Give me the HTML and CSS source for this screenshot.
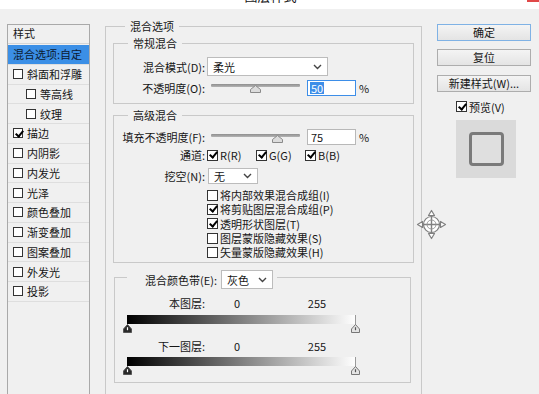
FILE: index.html
```html
<!DOCTYPE html>
<html lang="zh-CN">
<head>
    <meta charset="UTF-8">
    <meta name="viewport" content="width=device-width, initial-scale=1.0">
    <title>图层样式</title>
    <link rel="stylesheet" href="styles.css">
</head>
<body>

    <div class="titlebar">
        <span class="title">图层样式</span>
        <span class="close"></span>
    </div>

    <div class="dialog">
        <!-- effect list -->
        <div class="styles">
            <div class="styles-head">样式</div>
            <div class="item active">混合选项:自定</div>
            <div class="item"><span class="cb"></span>斜面和浮雕</div>
            <div class="item sub"><span class="cb"></span>等高线</div>
            <div class="item sub"><span class="cb"></span>纹理</div>
            <div class="item"><span class="cb on"></span>描边</div>
            <div class="item"><span class="cb"></span>内阴影</div>
            <div class="item"><span class="cb"></span>内发光</div>
            <div class="item"><span class="cb"></span>光泽</div>
            <div class="item"><span class="cb"></span>颜色叠加</div>
            <div class="item"><span class="cb"></span>渐变叠加</div>
            <div class="item"><span class="cb"></span>图案叠加</div>
            <div class="item"><span class="cb"></span>外发光</div>
            <div class="item"><span class="cb"></span>投影</div>
        </div>

        <!-- blending options -->
        <div class="options">
            <div class="group outer">
                <div class="legend">混合选项</div>

                <div class="group normal">
                    <div class="legend">常规混合</div>
                    <div class="row mode-row">
                        <span class="label">混合模式(D):</span>
                        <div class="select mode-select">
                            <span>柔光</span>
                            <svg class="chev" width="9" height="6" viewBox="0 0 9 6"><polyline points="1,1 4.5,4.5 8,1" fill="none" stroke="#444" stroke-width="1.4"/></svg>
                        </div>
                    </div>
                    <div class="row slider-row">
                        <span class="label">不透明度(O):</span>
                        <div class="slider">
                            <div class="track"></div>
                            <svg class="thumb" style="left: 50%" width="11" height="8" viewBox="0 0 11 8"><path d="M0.5 7.5V4.5L5.5 0.5L10.5 4.5V7.5Z" fill="#dcdcdc" stroke="#8a8a8a"/></svg>
                        </div>
                        <div class="num focus"><span class="sel">50</span></div>
                        <span class="pct">%</span>
                    </div>
                </div>

                <div class="group advanced">
                    <div class="legend">高级混合</div>
                    <div class="row fill-row">
                        <span class="label">填充不透明度(F):</span>
                        <div class="slider">
                            <div class="track"></div>
                            <svg class="thumb" style="left: 75%" width="11" height="8" viewBox="0 0 11 8"><path d="M0.5 7.5V4.5L5.5 0.5L10.5 4.5V7.5Z" fill="#dcdcdc" stroke="#8a8a8a"/></svg>
                        </div>
                        <div class="num">75</div>
                        <span class="pct">%</span>
                    </div>
                    <div class="row channel-row">
                        <span class="label">通道:</span>
                        <span class="check chan"><span class="cb on"></span>R(R)</span>
                        <span class="check chan"><span class="cb on"></span>G(G)</span>
                        <span class="check"><span class="cb on"></span>B(B)</span>
                    </div>
                    <div class="row knock-row">
                        <span class="label">挖空(N):</span>
                        <div class="select knock-select">
                            <span>无</span>
                            <svg class="chev" width="9" height="6" viewBox="0 0 9 6"><polyline points="1,1 4.5,4.5 8,1" fill="none" stroke="#444" stroke-width="1.4"/></svg>
                        </div>
                    </div>
                    <div class="checklist">
                        <span class="check"><span class="cb"></span>将内部效果混合成组(I)</span>
                        <span class="check"><span class="cb on"></span>将剪贴图层混合成组(P)</span>
                        <span class="check"><span class="cb on"></span>透明形状图层(T)</span>
                        <span class="check"><span class="cb"></span>图层蒙版隐藏效果(S)</span>
                        <span class="check"><span class="cb"></span>矢量蒙版隐藏效果(H)</span>
                    </div>
                </div>

                <div class="group blend">
                    <div class="legend blend-legend">
                        <span class="blend-label">混合颜色带(E):</span>
                        <div class="select gray-select">
                            <span>灰色</span>
                            <svg class="chev" width="9" height="6" viewBox="0 0 9 6"><polyline points="1,1 4.5,4.5 8,1" fill="none" stroke="#444" stroke-width="1.4"/></svg>
                        </div>
                    </div>

                    <div class="row range-row">
                        <span class="label">本图层:</span>
                        <span class="low">0</span>
                        <span class="high">255</span>
                    </div>
                    <div class="ramp">
                        <div class="ramp-bar"></div>
                        <div class="ramp-end"></div>
                        <svg class="stop stop-left" width="9" height="9" viewBox="0 0 9 9"><path d="M0.5 8.5V5L4.5 0.5L8.5 5V8.5Z" fill="#2a2a2a" stroke="#555"/><path d="M4.5 3.2V6.2" stroke="#fff" stroke-width="1.2"/></svg>
                        <svg class="stop stop-right" width="9" height="9" viewBox="0 0 9 9"><path d="M0.5 8.5V5L4.5 0.5L8.5 5V8.5Z" fill="#e4e4e4" stroke="#777"/><path d="M4.5 3.2V6.2" stroke="#555" stroke-width="1.2"/></svg>
                    </div>

                    <div class="row range-row under">
                        <span class="label">下一图层:</span>
                        <span class="low">0</span>
                        <span class="high">255</span>
                    </div>
                    <div class="ramp">
                        <div class="ramp-bar"></div>
                        <div class="ramp-end"></div>
                        <svg class="stop stop-left" width="9" height="9" viewBox="0 0 9 9"><path d="M0.5 8.5V5L4.5 0.5L8.5 5V8.5Z" fill="#2a2a2a" stroke="#555"/><path d="M4.5 3.2V6.2" stroke="#fff" stroke-width="1.2"/></svg>
                        <svg class="stop stop-right" width="9" height="9" viewBox="0 0 9 9"><path d="M0.5 8.5V5L4.5 0.5L8.5 5V8.5Z" fill="#e4e4e4" stroke="#777"/><path d="M4.5 3.2V6.2" stroke="#555" stroke-width="1.2"/></svg>
                    </div>
                </div>
            </div>
        </div>

        <!-- buttons and preview -->
        <div class="actions">
            <div class="btn default">确定</div>
            <div class="btn">复位</div>
            <div class="btn new">新建样式(W)...</div>
            <div class="check preview-check"><span class="cb on"></span>预览(V)</div>
            <div class="preview"><div class="preview-swatch"></div></div>
        </div>
    </div>

    <!-- move cursor sitting over the dialog -->
    <svg class="cursor" width="31" height="31" viewBox="0 0 31 31">
        <g fill="#fff" stroke="#808080" stroke-width="1.2" stroke-linejoin="round">
            <path d="M15.5 1.5L18.5 6.5H12.5Z"/>
            <path d="M15.5 29.5L18.5 24.5H12.5Z"/>
            <path d="M1.5 15.5L6.5 12.5V18.5Z"/>
            <path d="M29.5 15.5L24.5 12.5V18.5Z"/>
            <circle cx="15.5" cy="15.5" r="8"/>
        </g>
        <path d="M15.5 6.5V24.5M6.5 15.5H24.5" stroke="#808080" stroke-width="1.4"/>
        <circle cx="15.5" cy="15.5" r="4.5" fill="none" stroke="#9a9a9a" stroke-width="1"/>
    </svg>

</body>
</html>
```

FILE: styles.css
```css
body {
    margin: 0;
    width: 539px;
    height: 394px;
    overflow: hidden;
    position: relative;
    background-color: #f0f0f0;
    font-family: "Noto Sans CJK SC", "Noto Sans", sans-serif;
    font-size: 11px;
    color: #161616;
}

/* window title, mostly cut off at the top */
.titlebar {
    height: 9px;
    background-color: #fff;
    overflow: hidden;
    position: relative;
    text-align: center;
}

.title {
    display: block;
    font-size: 13px;
    line-height: 16px;
    margin-top: -12px;
    padding-left: 2px;
}

.close {
    position: absolute;
    right: 0;
    top: 0;
    width: 12px;
    height: 2px;
    background-color: #e04848;
}

.dialog {
    display: flex;
    align-items: flex-start;
    padding-left: 7px;
}

/* left list */
.styles {
    width: 83px;
    height: 380px;
    margin-top: 15px;
    border: 1px solid #a9a9a9;
    box-sizing: border-box;
}

.styles-head {
    height: 18px;
    line-height: 16px;
    padding-left: 5px;
    border-bottom: 1px solid #d6d6d6;
}

.item {
    display: flex;
    align-items: center;
    height: 19.75px;
    padding-left: 5px;
    border-bottom: 1px solid #dedede;
    box-sizing: border-box;
    white-space: nowrap;
}

.item.active {
    margin-top: 1px;
    background-color: #3b8fe6;
    color: #0c1a30;
}

.item.sub {
    padding-left: 18px;
}

.cb {
    position: relative;
    display: inline-block;
    flex: none;
    width: 11px;
    height: 11px;
    border: 1px solid #333;
    background-color: #fff;
    box-sizing: border-box;
    margin-right: 2px;
}

.item .cb {
    width: 10px;
    height: 10px;
    margin-right: 4px;
}

.cb.on::after {
    content: "";
    position: absolute;
    left: 2.5px;
    top: -0.5px;
    width: 3px;
    height: 6px;
    border: solid #000;
    border-width: 0 2px 2px 0;
    transform: rotate(40deg);
}

/* group boxes */
.options {
    width: 317px;
    margin-left: 15px;
    margin-top: 17px;
}

.group {
    border: 1px solid #c9c9c9;
}

.legend {
    width: fit-content;
    height: 14px;
    line-height: 14px;
    margin: -8px 0 0 12px;
    padding: 0 5px;
    background-color: #f0f0f0;
    white-space: nowrap;
}

.outer {
    height: 380px;
    padding: 0 7px;
    box-sizing: border-box;
}

.normal {
    margin-top: 10px;
    padding-bottom: 8px;
}

.normal .legend,
.advanced .legend {
    margin-left: 14px;
}

.advanced {
    margin-top: 11px;
    padding-bottom: 3px;
}

.row {
    display: flex;
    align-items: center;
    white-space: nowrap;
}

.label {
    flex: none;
    width: 91px;
    text-align: right;
}

.select {
    display: flex;
    align-items: center;
    height: 19px;
    margin-left: 2px;
    padding-left: 5px;
    border: 1px solid #bcbcbc;
    background-color: #fff;
    box-sizing: border-box;
}

.chev {
    margin-left: auto;
    margin-right: 5px;
}

.mode-row {
    margin-top: 7px;
    height: 19px;
}

.mode-select {
    width: 121px;
}

.slider-row {
    margin-top: 4px;
    height: 15px;
}

.slider {
    position: relative;
    flex: none;
    width: 89px;
    height: 15px;
    margin-left: 6px;
}

.track {
    margin-top: 4px;
    height: 3px;
    border-radius: 1px;
    background: linear-gradient(#8e8e8e, #b4b4b4);
}

.thumb {
    position: absolute;
    top: 5px;
    margin-left: -5.5px;
}

.num {
    flex: none;
    width: 49px;
    height: 16px;
    margin-left: 7px;
    padding-left: 3px;
    line-height: 14px;
    border: 1px solid #b8b8b8;
    background-color: #fff;
    box-sizing: border-box;
}

.num.focus {
    border-color: #3d8ee8;
    padding-left: 2px;
}

.sel {
    display: inline-block;
    padding: 0 1px;
    line-height: 12px;
    background-color: #3d8ee8;
    color: #fff;
}

.pct {
    margin-left: 3px;
}

.fill-row {
    margin-top: 7px;
    height: 16px;
}

.channel-row {
    margin-top: 3px;
    height: 14px;
}

.check {
    display: flex;
    align-items: center;
    white-space: nowrap;
}

.channel-row .check {
    margin-left: 2px;
}

.chan {
    width: 47px;
}

.knock-row {
    margin-top: 6px;
    height: 16px;
}

.knock-select {
    width: 50px;
    height: 16px;
    margin-left: 3px;
}

.checklist {
    margin-top: 4px;
    padding-left: 93px;
}

.checklist .check {
    height: 14.3px;
    line-height: 14px;
}

/* blend if */
.blend {
    height: 106px;
    margin: 14px 3px 0 1px;
    box-sizing: border-box;
}

.blend-legend {
    display: flex;
    align-items: center;
    height: 19px;
    margin-left: 12px;
    padding: 0 4px;
}

.blend-label {
    padding-left: 14px;
}

.gray-select {
    width: 52px;
    margin-left: 4px;
}

.range-row {
    margin-top: 7px;
    height: 14px;
}

.range-row.under {
    margin-top: 6px;
}

.range-row .label {
    width: 90px;
}

.low {
    width: 64px;
    text-align: center;
}

.high {
    width: 96px;
    text-align: center;
}

.ramp {
    position: relative;
    width: 229px;
    height: 18px;
    margin: 5px 0 0 12px;
}

.range-row.under + .ramp {
    margin-top: 4px;
}

.ramp-bar {
    height: 9px;
    background: linear-gradient(to right, #000, #fff);
}

.ramp-end {
    position: absolute;
    right: 0;
    top: 0;
    width: 1px;
    height: 10px;
    background-color: #9a9a9a;
}

.stop {
    position: absolute;
    top: 9px;
}

.stop-left {
    left: -4px;
}

.stop-right {
    right: -4px;
}

/* right column */
.actions {
    width: 94px;
    margin-left: 15px;
    margin-top: 15px;
}

.btn {
    height: 17px;
    margin-bottom: 8px;
    line-height: 15px;
    text-align: center;
    border: 1px solid #adadad;
    background: linear-gradient(#f4f4f4, #e4e4e4);
    box-sizing: border-box;
}

.btn.default {
    border-color: #7fb2e5;
}

.btn.new {
    margin-top: 9px;
}

.preview-check {
    margin-top: 6px;
    padding-left: 19px;
    height: 13px;
}

.preview {
    display: flex;
    align-items: center;
    justify-content: center;
    width: 60px;
    height: 58px;
    margin: 7px 0 0 19px;
    background-color: #dadada;
}

.preview-swatch {
    width: 35px;
    height: 34px;
    border: 3px solid #7a7a7a;
    border-radius: 4px;
    background-color: #dfdfdf;
    box-sizing: border-box;
}

.cursor {
    position: absolute;
    left: 416px;
    top: 209px;
}
```
